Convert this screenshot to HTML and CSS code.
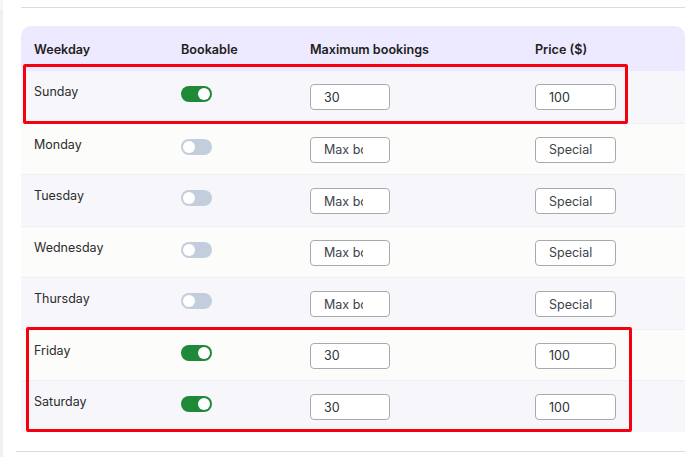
FILE: index.html
```html
<!DOCTYPE html>
<html>
	<head>
		<meta charset="UTF-8">
		<title>Weekday bookings</title>
		<link rel="stylesheet" href="styles.css">
	</head>
	<body>
		<div id="page">
			<div class="side"></div>
			<div class="main">
				<div class="rule top"></div>
				<table class="days">
					<thead>
						<tr>
							<th class="c1">Weekday</th>
							<th class="c2">Bookable</th>
							<th class="c3">Maximum bookings</th>
							<th class="c4">Price ($)</th>
						</tr>
					</thead>
					<tbody>
						<tr>
							<td class="day">Sunday</td>
							<td><span class="toggle on"></span></td>
							<td><input type="text" value="30" placeholder="Max bookings" /></td>
							<td><input type="text" value="100" placeholder="Special price" /></td>
						</tr>
						<tr>
							<td class="day">Monday</td>
							<td><span class="toggle"></span></td>
							<td><input type="text" placeholder="Max bookings" /></td>
							<td><input type="text" placeholder="Special price" /></td>
						</tr>
						<tr>
							<td class="day">Tuesday</td>
							<td><span class="toggle"></span></td>
							<td><input type="text" placeholder="Max bookings" /></td>
							<td><input type="text" placeholder="Special price" /></td>
						</tr>
						<tr>
							<td class="day">Wednesday</td>
							<td><span class="toggle"></span></td>
							<td><input type="text" placeholder="Max bookings" /></td>
							<td><input type="text" placeholder="Special price" /></td>
						</tr>
						<tr>
							<td class="day">Thursday</td>
							<td><span class="toggle"></span></td>
							<td><input type="text" placeholder="Max bookings" /></td>
							<td><input type="text" placeholder="Special price" /></td>
						</tr>
						<tr>
							<td class="day">Friday</td>
							<td><span class="toggle on"></span></td>
							<td><input type="text" value="30" placeholder="Max bookings" /></td>
							<td><input type="text" value="100" placeholder="Special price" /></td>
						</tr>
						<tr>
							<td class="day">Saturday</td>
							<td><span class="toggle on"></span></td>
							<td><input type="text" value="30" placeholder="Max bookings" /></td>
							<td><input type="text" value="100" placeholder="Special price" /></td>
						</tr>
					</tbody>
				</table>
				<div class="rule bottom"></div>
			</div>
			<!-- annotation boxes drawn over the table -->
			<div class="mark mark1"></div>
			<div class="mark mark2"></div>
		</div>
	</body>
</html>
```

FILE: styles.css
```css
*{margin: 0;padding: 0;box-sizing: border-box;}
body{font-size: 12.5px;font-family: Inter, "Noto Sans", sans-serif;color: #2c2c2c;background: #fff;}
#page{
	position: relative;
	display: flex;
	width: 685px;
	height: 457px;
	overflow: hidden;
}
.side{
	width: 3px;
	flex: none;
	background: #f0f0f1;
	border-top: 10px solid #f6f6f7;
}
.main{
	flex: 1;
	padding-top: 7px;
}
.rule{
	height: 1px;
	background: #dcdcde;
}
.rule.top{
	margin-left: 18px;
	margin-bottom: 18px;
}
.rule.bottom{
	margin-left: 13px;
	margin-top: 19px;
}
.days{
	margin-left: 18px;
	width: 664px;
	border-collapse: separate;
	border-spacing: 0;
	table-layout: fixed;
}
.days th{
	height: 45px;
	background: #ede9fe;
	text-align: left;
	font-weight: 600;
	font-size: 12.6px;
	color: #1e1e1e;
	padding: 2px 0 0 13px;
	vertical-align: middle;
}
.days th.c1{width: 147px;border-top-left-radius: 10px;}
.days th.c2{width: 129px;}
.days th.c3{width: 225px;}
.days th.c4{border-top-right-radius: 10px;}
.days td{
	height: 51.5px;
	padding: 11px 0 0 13px;
	vertical-align: top;
	border-top: 1px solid #f0f0f2;
}
.days tbody tr:nth-child(odd) td{background: #f7f7fb;}
.days tbody tr:nth-child(even) td{background: #fcfcfa;}
.days tbody tr:first-child td{border-top: 0;}
.day{
	line-height: 20px;
	color: #2c2c2c;
}
.toggle{
	display: block;
	position: relative;
	width: 31px;
	height: 16px;
	margin-top: 4px;
	border-radius: 8px;
	background: #c3cedc;
}
.toggle::after{
	content: "";
	position: absolute;
	top: 2px;
	left: 2px;
	width: 12px;
	height: 12px;
	border-radius: 50%;
	background: #fff;
}
.toggle.on{background: #1e8a39;}
.toggle.on::after{left: 17px;}
.days input{
	display: block;
	width: 80px;
	height: 26px;
	margin-top: 2px;
	padding: 0 26px 0 13px;
	border: 1px solid #a7aaad;
	border-radius: 4px;
	background: #fff;
	font-family: Inter, "Noto Sans", sans-serif;
	font-size: 12.5px;
	color: #2c3338;
	outline: none;
}
.days td:nth-child(4) input{width: 81px;padding-right: 22px;}
.days input::placeholder{color: #3c434a;opacity: 1;}
.mark{
	position: absolute;
	border: 3px solid #f5000f;
	border-radius: 2px;
}
.mark1{
	left: 23px;
	top: 64px;
	width: 605px;
	height: 60px;
}
.mark2{
	left: 26px;
	top: 327px;
	width: 606px;
	height: 105px;
}
```
